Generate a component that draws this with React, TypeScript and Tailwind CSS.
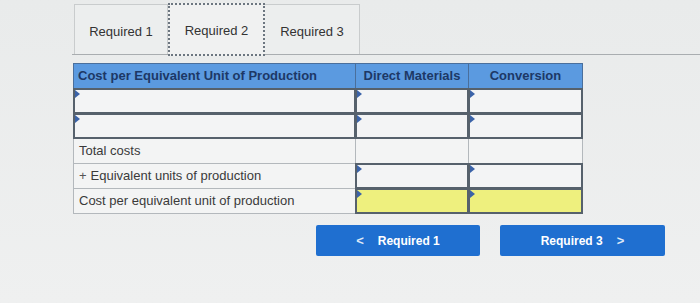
import React from "react";

const Tri = () => (
  <span className="absolute left-0 top-0 w-0 h-0 border-t-[4px] border-b-[4px] border-l-[5px] border-t-transparent border-b-transparent border-l-[#3b63a8]" />
);

function InputCell({ yellow = false }: { yellow?: boolean }) {
  return (
    <div
      className={`relative h-[26px] border-2 border-[#56616c] -mt-[1px] -ml-[1px] ${
        yellow ? "bg-[#eef07e]" : "bg-[#f3f4f5]"
      }`}
    >
      <Tri />
    </div>
  );
}

function LabelCell({ text, plus = false }: { text: string; plus?: boolean }) {
  return (
    <div className="h-[26px] border border-[#b3b8bc] -mt-[1px] bg-[#f3f4f4] flex items-center pl-[5px] text-[13px] text-[#3a3a3a]">
      {plus && <span className="mr-[4px] text-[#555]">+</span>}
      {text}
    </div>
  );
}

function PlainCell() {
  return <div className="h-[26px] border border-[#b3b8bc] -mt-[1px] -ml-[1px] bg-[#f3f4f4]" />;
}

export default function App() {
  return (
    <div
      className="w-[700px] h-[303px] overflow-hidden bg-gradient-to-b from-[#e9ebeb] to-[#eff0f0] pt-[5px]"
      style={{ fontFamily: '"Liberation Sans", Arial, sans-serif' }}
    >
      {/* Tabs */}
      <div className="ml-[72px] flex items-end border-b border-[#a9adb0] h-[50px] pl-[2px]">
        <div className="w-[94px] h-[50px] pt-[5px] border border-b-0 border-[#c9cccd] bg-[#eceeee] flex items-center justify-center text-[13px] text-[#333]">
          Required 1
        </div>
        <div className="w-[97px] h-[53px] pt-[3px] -mb-[2px] border-2 border-dotted border-[#6c7680] bg-[#f0f1f1] flex items-center justify-center text-[13px] text-[#333]">
          Required 2
        </div>
        <div className="w-[95px] h-[50px] pt-[5px] border border-b-0 border-l-0 border-[#c9cccd] bg-[#eceeee] flex items-center justify-center text-[13px] text-[#333]">
          Required 3
        </div>
      </div>

      {/* Table */}
      <div className="ml-[73px] mt-[8px] grid grid-cols-[283px_113px_114px] w-[510px]">
        <div className="h-[26px] bg-[#5b9ae0] border border-[#4a6f9c] flex items-center pl-[4px] text-[13px] font-bold text-[#1d3866]">
          Cost per Equivalent Unit of Production
        </div>
        <div className="h-[26px] bg-[#5b9ae0] border border-[#4a6f9c] -ml-[1px] flex items-center justify-center text-[13px] font-bold text-[#1d3866]">
          Direct Materials
        </div>
        <div className="h-[26px] bg-[#5b9ae0] border border-[#4a6f9c] -ml-[1px] flex items-center justify-center text-[13px] font-bold text-[#1d3866]">
          Conversion
        </div>

        <div className="relative h-[26px] border-2 border-[#56616c] -mt-[1px] bg-[#f3f4f5]">
          <Tri />
        </div>
        <InputCell />
        <InputCell />

        <div className="relative h-[26px] border-2 border-[#56616c] -mt-[1px] bg-[#f3f4f5]">
          <Tri />
        </div>
        <InputCell />
        <InputCell />

        <LabelCell text="Total costs" />
        <PlainCell />
        <PlainCell />

        <LabelCell text="Equivalent units of production" plus />
        <InputCell />
        <InputCell />

        <LabelCell text="Cost per equivalent unit of production" />
        <InputCell yellow />
        <InputCell yellow />
      </div>

      {/* Buttons */}
      <div className="ml-[316px] mt-[11px] flex gap-[20px]">
        <button className="w-[164px] h-[31px] bg-[#1f6fd0] rounded-[2px] flex items-center justify-center gap-[14px] text-white text-[12px] font-bold">
          <span className="text-[13px] text-[#dfe9f7]">&lt;</span>
          <span>Required 1</span>
        </button>
        <button className="w-[165px] h-[31px] bg-[#1f6fd0] rounded-[2px] flex items-center justify-center gap-[14px] text-white text-[12px] font-bold">
          <span>Required 3</span>
          <span className="text-[13px] text-[#dfe9f7]">&gt;</span>
        </button>
      </div>
    </div>
  );
}
